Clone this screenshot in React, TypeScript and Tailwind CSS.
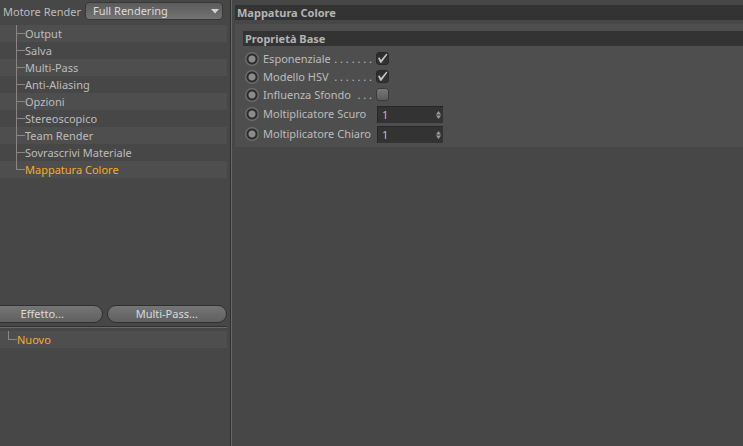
import { useState } from "react"

const pages = [
  "Output",
  "Salva",
  "Multi-Pass",
  "Anti-Aliasing",
  "Opzioni",
  "Stereoscopico",
  "Team Render",
  "Sovrascrivi Materiale",
  "Mappatura Colore",
]

const Branch = ({ last }: { last?: boolean }) => (
  <svg width="9" height="17" viewBox="0 0 9 17" fill="none" stroke="#8a8582" shapeRendering="crispEdges" aria-hidden="true">
    <path d={last ? "M0.5 0V8.5H9" : "M0.5 0V17M0.5 8.5H9"} />
  </svg>
)

const KeyDot = ({ label }: { label: string }) => (
  <input
    type="radio"
    aria-label={`Traccia ${label}`}
    className="size-[14px] shrink-0 appearance-none rounded-full bg-[radial-gradient(circle,#8b8b8b_0_3px,#2b2b2b_4px_5px,#6c6c6c_6px)]"
  />
)

const CheckRow = ({ id, label, dots, initial }: { id: string; label: string; dots: string; initial: boolean }) => {
  const [on, setOn] = useState(initial)

  return (
    <div className="flex h-[18px] items-center">
      <KeyDot label={label} />
      <label htmlFor={id} className="ml-1 flex w-[113px] justify-between pr-1">
        <span>{label}</span>
        <span aria-hidden="true">{dots}</span>
      </label>
      <span className="relative -mt-px flex size-[13px]">
        <input
          id={id}
          type="checkbox"
          checked={on}
          onChange={(e) => setOn(e.target.checked)}
          className="size-[13px] appearance-none rounded-[3px] border border-[#3a3a3a] bg-gradient-to-b from-[#777777] to-[#5c5c5c] checked:border-[#292929] checked:from-[#2b2b2b] checked:to-[#343434]"
        />
        {on && (
          <svg className="pointer-events-none absolute inset-0" width="13" height="13" viewBox="0 0 13 13" aria-hidden="true">
            <path d="M2 6L3.6 5.4L5 8L10.4 1.6L11.4 2.4L5.4 10.8H4.2Z" fill="#c4c4c4" />
          </svg>
        )}
      </span>
    </div>
  )
}

const NumberRow = ({ id, label }: { id: string; label: string }) => (
  <div className="flex h-5 items-center">
    <KeyDot label={label} />
    <label htmlFor={id} className="ml-1 w-[114px] whitespace-nowrap">{label}</label>
    <div className="flex h-[17px] w-[66px] items-center border-t border-l border-[#262626] bg-[#333333] pr-[2px]">
      <input id={id} type="text" defaultValue="1" className="h-4 w-full min-w-0 bg-transparent pl-1 outline-none" />
      <svg width="5" height="8" viewBox="0 0 5 8" fill="#999999" className="shrink-0" aria-hidden="true">
        <path d="M2.5 0L5 3.4H0ZM0 4.6H5L2.5 8Z" />
      </svg>
    </div>
  </div>
)

const pill =
  "h-[18px] flex-1 rounded-full border border-[#303030] bg-gradient-to-b from-[#757575] to-[#606060] text-[#dadada] leading-4"

export default function App() {
  const [page, setPage] = useState("Mappatura Colore")

  return (
    <div className="flex min-h-screen bg-[#474747] font-['Noto_Sans','Open_Sans',sans-serif] text-[11px] leading-4 text-[#bcbcbc]">
      <aside className="w-[230px] shrink-0 overflow-hidden">
        <div className="flex h-[25px] items-start pt-[2px] pr-[7px] pl-[3px]">
          <label htmlFor="engine" className="w-[82px] shrink-0 pt-[2px]">Motore Render</label>
          <div className="relative flex-1">
            <select
              id="engine"
              className="block h-[18px] w-full appearance-none rounded-[4px] border border-[#383838] bg-gradient-to-b from-[#5b5b5b] to-[#737373] pl-[7px] leading-4 text-[#dadada]"
            >
              <option>Full Rendering</option>
            </select>
            <svg className="pointer-events-none absolute top-[7px] right-1" width="8" height="5" viewBox="0 0 8 5" fill="#d4d4d4" aria-hidden="true">
              <path d="M0 0H8L4 4.5Z" />
            </svg>
          </div>
        </div>

        <ul className="mr-[3px] min-h-[280px]">
          {pages.map((name, i) => (
            <li key={name} className="odd:bg-[#4e4e4e]">
              <button
                type="button"
                onClick={() => setPage(name)}
                className={`flex h-[17px] w-full items-center pl-4 ${name === page ? "text-[#f3ad28]" : ""}`}
              >
                <Branch last={i === pages.length - 1} />
                {name}
              </button>
            </li>
          ))}
        </ul>

        <div className="mr-[3px] -ml-[18px] flex gap-1">
          <button type="button" className={pill}>Effetto...</button>
          <button type="button" className={pill}>Multi-Pass...</button>
        </div>

        <div className="mt-[3px] mr-[3px] h-[2px] border-t border-b border-t-[#303030] border-b-[#696969]" />

        <div className="mt-[3px] mr-[3px] bg-[#4e4e4e]">
          <button type="button" className="flex h-[17px] w-full items-center pl-2 text-[#f3ad28]">
            <Branch last />
            Nuovo
          </button>
        </div>
      </aside>

      <main className="min-w-0 flex-1 border-l border-[#2f2f2f]">
        <div className="min-h-full border-l border-[#6a6a6a] pt-[5px] pl-[3px]">
          <h1 className="h-[15px] bg-[#333333] pl-[2px] leading-[15px] font-bold text-[#b4b4b4]">Mappatura Colore</h1>

          <section className="mt-1 bg-[#4e4e4e] pt-[7px] pb-[3px] pl-2">
            <h2 className="h-[15px] bg-[#333333] pl-[2px] leading-[15px] font-bold text-[#b4b4b4]">Proprietà Base</h2>
            <div className="pt-1 pl-[2px]">
              <CheckRow id="exp" label="Esponenziale" dots=". . . . . . ." initial={true} />
              <CheckRow id="hsv" label="Modello HSV" dots=". . . . . . ." initial={true} />
              <CheckRow id="bg" label="Influenza Sfondo" dots=". . ." initial={false} />
              <NumberRow id="dark" label="Moltiplicatore Scuro" />
              <NumberRow id="light" label="Moltiplicatore Chiaro" />
            </div>
          </section>
        </div>
      </main>
    </div>
  )
}
